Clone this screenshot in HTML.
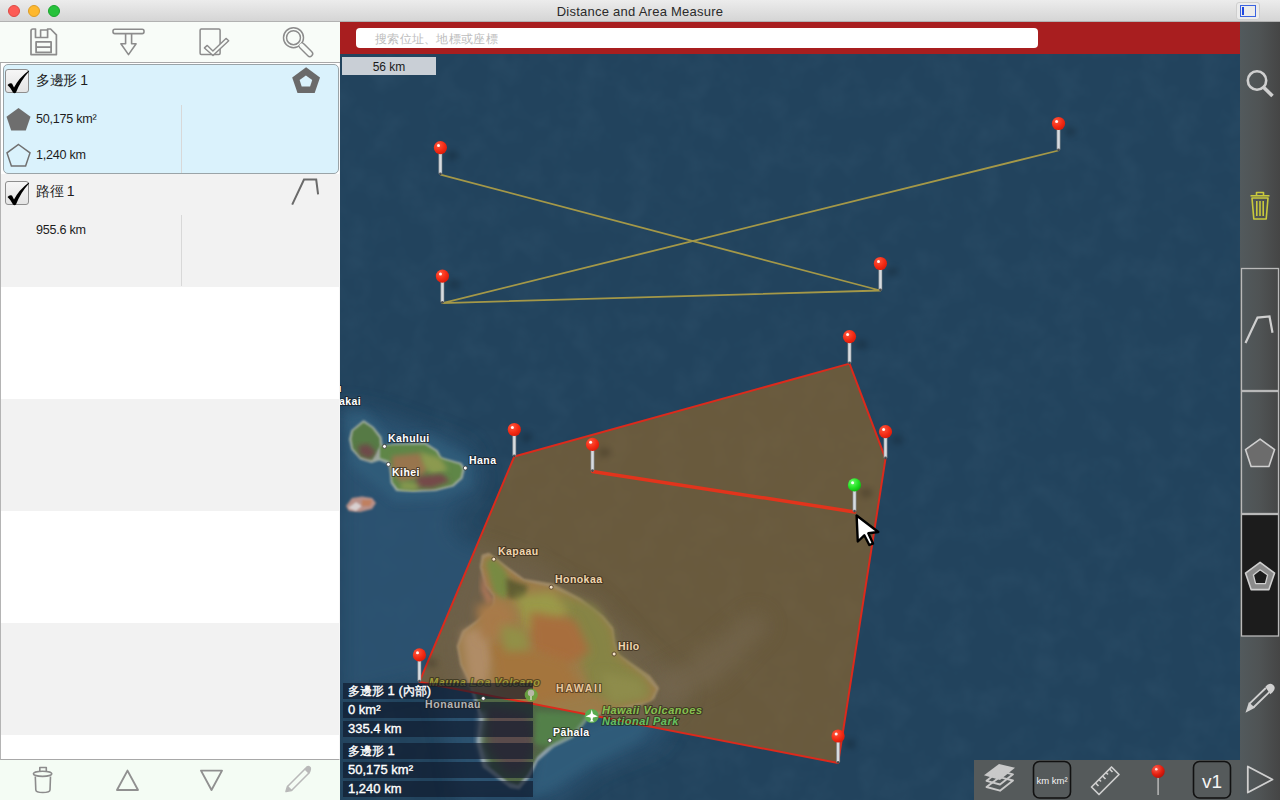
<!DOCTYPE html>
<html><head><meta charset="utf-8">
<style>
*{margin:0;padding:0;box-sizing:border-box}
html,body{width:1280px;height:800px;overflow:hidden;background:#fff;font-family:"Liberation Sans",sans-serif}
.abs{position:absolute}
svg{position:absolute;overflow:visible}
#title{left:0;top:0;width:1280px;height:22px;background:linear-gradient(#ececec,#d5d5d5);border-bottom:1px solid #b2b2b2}
#title .t{position:absolute;left:0;width:1280px;top:4px;text-align:center;font-size:13px;color:#2a2a2a;letter-spacing:0.25px}
.tl{position:absolute;top:5px;width:12px;height:12px;border-radius:50%}
#tb{left:0;top:22px;width:340px;height:41px;background:#f8fcf8;border-bottom:1px solid #a8a8a8}
#list{left:0;top:63px;width:340px;height:697px;border-bottom:1px solid #a8a8a8;background:#fff;border-left:1px solid #b4b4b4;border-right:1px solid #f6f6f6}
.row{position:absolute;left:0;width:338px;height:112px}
.g{background:#f2f2f2}
.sel{position:absolute;left:2px;top:1px;width:336px;height:110px;background:#daf2fc;border:1px solid #9aa4a8;border-radius:5px}
.cb{position:absolute;left:4px;width:24px;height:24px;border:1px solid #8e8e8e;border-radius:3px;background:linear-gradient(#f6f6f6,#e4e4e4)}
.name{position:absolute;left:35px;font-size:14px;color:#1d1d1d;letter-spacing:-0.4px}
.val{position:absolute;left:35px;font-size:12.6px;color:#1d1d1d;letter-spacing:-0.25px}
.vsep{position:absolute;left:180px;width:1px;background:#d8d8d8}
#btb{left:0;top:760px;width:340px;height:40px;background:#f4fcf4}
#map{left:340px;top:22px;width:900px;height:778px;background:#22435d;overflow:hidden}
#rt{left:1240px;top:22px;width:40px;height:778px;background:linear-gradient(90deg,#525a5d,#4f5354 50%,#454545)}
#redbar{left:340px;top:22px;width:900px;height:32px;background:#a81e1f}
#search{left:356px;top:28px;width:682px;height:20px;background:#fff;border-radius:4px}
#search span{position:absolute;left:19px;top:3px;font-size:12px;color:#bdbdbd;letter-spacing:0.3px}
#scale{left:342px;top:57px;width:94px;height:18px;background:#c9cfd6}
#scale span{position:absolute;left:0;width:94px;top:3px;text-align:center;font-size:12px;color:#1a1a1a}
.info{position:absolute;left:343px;width:190px;height:16px;background:rgba(14,24,42,0.64);color:#fff;font-size:13px;font-weight:normal;-webkit-text-stroke:0.35px #fff;padding-left:5px;line-height:16px}
</style></head><body>
<div id="title" class="abs">
  <div class="tl" style="left:8px;background:#fd5c56;border:1px solid #dd4a44"></div>
  <div class="tl" style="left:28px;background:#feb82e;border:1px solid #dc9c26"></div>
  <div class="tl" style="left:48px;background:#27c23b;border:1px solid #1aa42d"></div>
  <div class="t">Distance and Area Measure</div>
  <div class="abs" style="left:1236px;top:2px;width:24px;height:18px;border-radius:3px;background:#ececec;border:1px solid #cfcfcf"></div>
  <div class="abs" style="left:1240px;top:5px;width:16px;height:12px;border:1.5px solid #3a62e0"></div>
  <div class="abs" style="left:1242px;top:7px;width:2px;height:8px;background:#2048e0"></div>
</div>
<div id="tb" class="abs">
  <svg width="340" height="41" style="left:0;top:0" fill="none" stroke="#8c8c8c" stroke-width="1.6" stroke-linejoin="round">
    <path d="M35.5,15.5 V7 H33 Q31,7 31,9 V32.6 H56.4 V12.8 L50.6,7 H47.6 V15.5 Z" stroke-width="1.7"/>
    <path d="M40.6,15.5 V8 H47.6" stroke-width="1.6"/>
    <rect x="36.1" y="19.9" width="15" height="10.5" stroke-width="1.8"/>
    <path d="M36.1,25.1 H51.1" stroke-width="1.8"/>
    <rect x="113" y="7.2" width="31" height="4.4" rx="1.8" />
    <path d="M125.6,11.6 V21.8 H120.9 L128.5,32.6 L136.1,21.8 H131.6 V11.6" />
    <rect x="200.1" y="7" width="20" height="25.4" rx="1.2" stroke-width="1.5"/>
    <path d="M207.3,23.4 L212.9,29 L226,16.4 L228.7,18.7 L213,33.5 L204.4,25.9 Z" fill="#f8fcf8" stroke-width="1.4"/>
    <path d="M302.3,24.3 L309.8,31.8" stroke-width="7.1" stroke-linecap="round" />
    <circle cx="293.5" cy="15.7" r="10" stroke-width="1.45" />
    <path d="M301.5,23.5 L309.8,31.8" stroke-width="4.2" stroke="#f8fcf8" stroke-linecap="round" />
    <circle cx="293.5" cy="15.7" r="6.95" stroke-width="1.45" />
  </svg>
</div>
<div id="list" class="abs">
  <div class="row" style="top:0">
    <div class="sel"></div>
    <div class="cb" style="top:6px"><svg width="24" height="24" style="left:0;top:0"><path d="M1.5,15 Q3.5,12.5 6,13.5 L8,17.5 Q13,8 22.5,0.8 Q23.5,0.5 23,1.5 Q15,10 10,22.5 Q8.5,24 7,22.5 Q4.5,17.5 1.5,15 Z" fill="#000"/></svg></div>
    <div class="name" style="top:9px">多邊形 1</div>
    <svg width="40" height="40" style="left:290px;top:2px"><path d="M15.1,2.25 L29,12.6 L23.7,28 H6.5 L1.2,12.6 Z" fill="#6a6a6a"/><path d="M14.9,10.6 L21.2,15 L19.1,21.6 H10.7 L8.6,15 Z" fill="#daf2fc"/></svg>
    <div class="vsep" style="top:42px;height:68px"></div>
    <svg width="30" height="30" style="left:5px;top:44px"><path d="M12.5,1 L24.5,9.8 L19.8,23.5 H5.2 L0.5,9.8 Z" fill="#6e6e6e"/></svg>
    <div class="val" style="top:49px">50,175 km²</div>
    <svg width="30" height="30" style="left:5px;top:80px"><path d="M12.5,1.5 L24,9.9 L19.6,23 H5.4 L1,9.9 Z" fill="none" stroke="#707070" stroke-width="1.5"/></svg>
    <div class="val" style="top:85px">1,240 km</div>
  </div>
  <div class="row g" style="top:111px;height:113px">
    <div class="cb" style="top:7px"><svg width="24" height="24" style="left:0;top:0"><path d="M1.5,15 Q3.5,12.5 6,13.5 L8,17.5 Q13,8 22.5,0.8 Q23.5,0.5 23,1.5 Q15,10 10,22.5 Q8.5,24 7,22.5 Q4.5,17.5 1.5,15 Z" fill="#000"/></svg></div>
    <div class="name" style="top:9px">路徑 1</div>
    <svg width="40" height="40" style="left:290px;top:0px"><path d="M1.2,30.6 L13,5.6 H25.2 L27.1,20.3" fill="none" stroke="#6a6a6a" stroke-width="2"/></svg>
    <div class="vsep" style="top:41px;height:71px"></div>
    <div class="val" style="top:49px">955.6 km</div>
  </div>
  <div class="row" style="top:224px"></div>
  <div class="row g" style="top:336px"></div>
  <div class="row" style="top:448px"></div>
  <div class="row g" style="top:560px"></div>
  <div class="row" style="top:672px;height:25px"></div>
</div>
<div id="btb" class="abs">
  <svg width="340" height="40" style="left:0;top:0" fill="none" stroke="#8c8c8c" stroke-width="1.6" stroke-linejoin="round">
    <path d="M39.8,11 V7.5 H46.3 V11" />
    <ellipse cx="42.6" cy="13.8" rx="9.2" ry="2.6" />
    <path d="M35.3,16.5 L35.8,30 Q36,32.5 42.8,32.5 Q49.8,32.5 50,30 L50.5,16.5" />
    <path d="M127.5,10.6 L138,30 H117 Z" stroke-width="1.9" stroke="#909090"/>
    <path d="M201,10.6 H222 L211.5,30 Z" stroke-width="1.9" stroke="#909090"/>
    <g stroke="#b9b9b9">
      <path d="M287.5,26.5 L305,9 M291.5,30.5 L309,13" />
      <path d="M286,31.5 L287.5,26.5 L291.5,30.5 Z" fill="#b9b9b9"/>
      <path d="M305,9 L307,7 Q308.5,6 310,7.5 Q311,9 309,13 Z" fill="#b9b9b9"/>
    </g>
  </svg>
</div>
<div id="map" class="abs">
<svg width="900" height="778" viewBox="340 22 900 778" style="left:0;top:0;overflow:hidden">
<defs>
  <filter id="b1" x="-20%" y="-20%" width="140%" height="140%"><feGaussianBlur stdDeviation="1"/></filter>
  <filter id="b2" x="-20%" y="-20%" width="140%" height="140%"><feGaussianBlur stdDeviation="2.5"/></filter>
  <filter id="b4" x="-30%" y="-30%" width="160%" height="160%"><feGaussianBlur stdDeviation="5"/></filter>
  <filter id="b8" x="-50%" y="-50%" width="200%" height="200%"><feGaussianBlur stdDeviation="10"/></filter>
  <filter id="sh" x="-100%" y="-100%" width="300%" height="300%"><feGaussianBlur stdDeviation="3"/></filter>
  <filter id="tex" x="0" y="0" width="100%" height="100%">
    <feTurbulence type="fractalNoise" baseFrequency="0.035" numOctaves="3" seed="4"/>
    <feColorMatrix values="0 0 0 0 0.16  0 0 0 0 0.31  0 0 0 0 0.43  0 0 0 0.9 -0.35"/>
  </filter>
  <radialGradient id="pinR" cx="0.35" cy="0.3" r="0.75"><stop offset="0" stop-color="#ff5a40"/><stop offset="0.6" stop-color="#f42b14"/><stop offset="1" stop-color="#d81a0a"/></radialGradient>
  <radialGradient id="pinG" cx="0.35" cy="0.3" r="0.75"><stop offset="0" stop-color="#6aff6a"/><stop offset="0.6" stop-color="#22e022"/><stop offset="1" stop-color="#10b010"/></radialGradient>
</defs>
<rect x="340" y="22" width="900" height="778" fill="#22435d"/>
<rect x="340" y="22" width="900" height="778" filter="url(#tex)" opacity="0.15"/>
<g filter="url(#b8)" fill="#2d5676" opacity="0.75">
  <path d="M340,405 L380,412 L470,445 L485,480 L450,525 L470,545 L455,600 L430,680 L340,700 Z"/>
  <path d="M470,540 L530,560 L640,640 L690,690 L660,745 L600,770 L560,800 L460,800 L440,700 L440,610 Z"/>
</g>
<g filter="url(#b4)" fill="#33607e" opacity="0.7">
  <path d="M345,415 L365,412 L390,438 L430,436 L470,458 L472,485 L440,500 L395,502 L350,465 Z"/>
  <path d="M540,745 L600,722 L660,705 L640,740 L590,765 L550,790 L530,800 Z"/>
</g>
<clipPath id="cin"><path d="M514.3,456.5 L849.5,363.6 L885.5,458.7 L838.1,763 L419.4,681.9 Z"/></clipPath>
<g>
  <path d="M351.2,430.2 L363.6,420.1 L373.7,426.9 L381.6,437 L382.7,446 L394,443.7 L425.5,442.6 L437.9,450.5 L441.2,457.2 L461.5,462.9 L464.9,468.5 L462.6,478.6 L453.6,486.5 L435.6,491 L413.1,492.1 L396.2,491 L390.6,483.1 L389.5,468.5 L388.4,464 L379.4,460.6 L371.5,462.9 L360.2,459.5 L351.2,449.4 L349,439.2 Z" fill="#9eaaa0" filter="url(#b1)"/>
  <path d="M353,431 L363.6,422.5 L372,428 L379.5,438 L380,446 L372,460 L361,457 L353,448.5 L351.5,439 Z" fill="#567a44" filter="url(#b1)"/>
  <path d="M358,446 L368,444 L376,452 L370,459 L360,455 Z" fill="#6e4a4a" filter="url(#b2)"/>
  <path d="M380,446 L394,445 L425,444.5 L436,451.5 L440,458.5 L460,464.5 L462.5,469 L460.5,477.5 L452,485 L435,489 L413,490 L398,489 L392.5,482 L391.5,468 L389,461 L380,458 Z" fill="#5e8646" filter="url(#b1)"/>
  <path d="M392,456 L420,453 L430,466 L420,478 L400,482 L392,470 Z" fill="#98744e" filter="url(#b2)"/>
  <path d="M420,452 L440,458 L448,470 L432,474 L424,466 Z" fill="#8c9a50" filter="url(#b2)"/>
  <path d="M418,476 L442,474 L450,481 L432,488 L414,487 Z" fill="#744a48" filter="url(#b2)"/>
  <path d="M402,482 L420,484 L416,490 L400,489 Z" fill="#8a9a50" filter="url(#b2)"/>
</g>
<path d="M346,506 L352,498 L362,496.5 L372,498 L376,503 L372,509 L360,512 L349,511 Z" fill="#b89088" filter="url(#b1)"/>
<path d="M348,508 L356,502 L362,506 L356,511 Z" fill="#d8d0d0" filter="url(#b1)"/>
<path d="M362,500 L372,500 L370,506 L362,506 Z" fill="#c08060" filter="url(#b1)"/>
<!-- Big island raw (outside polygon visible) -->
<g>
  <path d="M482,555 L489,553 L506,566 L524,579 L553,584 L581,599 L603,616 L613,628 L615,643 L618,654 L631,663 L650,676 L659,688 L654,699 L639,706 L607,712 L588,719 L572.5,738 L554,747 L538,761 L530,777 L519.5,789.5 L510,788 L483,767.5 L477,742.5 L480,719 L468,680 L460.5,665 L457,646 L462.5,631 L477.5,620 L492.5,605 L493,596 L485,586 L480,567 Z" fill="#8ea0a8" filter="url(#b1)"/>
  <path d="M484,559 L491,556 L505,569 L523,582 L550,588 L578,602 L600,619 L610,631 L612,646 L622,660 L646,678 L655,690 L642,702 L610,708 L585,715 L570,732 L552,743 L537,757 L527,775 L518,785 L508,782 L486,764 L480,740 L483,718 L471,680 L463,663 L460,646 L466,633 L480,622 L495,606 L495,595 L487,584 L483,567 Z" fill="#506a44" filter="url(#b1)"/>
  <path d="M486,705 L528,712 L536,742 L524,772 L508,775 L488,748 Z" fill="#5a4c4c" filter="url(#b4)"/>
  <path d="M536,712 L590,714 L574,734 L548,746 L534,744 Z" fill="#52804a" filter="url(#b2)"/>
  <path d="M478,712 L486,712 L482,745 L490,765 L484,768 L476,742 Z" fill="#9aa8b0" filter="url(#b2)" opacity="0.7"/>
</g>

<path d="M514.3,456.5 L849.5,363.6 L885.5,458.7 L838.1,763 L419.4,681.9 Z" fill="rgba(170,112,32,0.52)"/>
<path d="M440.4,174.6 L880.4,290.5 L442.4,303.1 L1058.5,150.5" fill="none" stroke="#a49848" stroke-width="1.8" stroke-linejoin="round"/>
<g clip-path="url(#cin)">
  <path d="M470,545 L530,565 L600,600 L640,650 L690,690 L660,720 L560,740 L470,720 L445,660 L450,600 Z" fill="#6e604b" filter="url(#b8)" opacity="0.7"/>
  <path d="M650,680 L700,655 L755,610 L770,625 L720,680 L665,705 Z" fill="#76684f" filter="url(#b8)" opacity="0.7"/>
  <path d="M482,555 L489,553 L506,566 L524,579 L553,584 L581,599 L603,616 L613,628 L615,643 L618,654 L631,663 L650,676 L659,688 L654,699 L639,706 L607,712 L588,719 L572.5,738 L554,747 L538,761 L530,777 L519.5,789.5 L510,788 L483,767.5 L477,742.5 L480,719 L468,680 L460.5,665 L457,646 L462.5,631 L477.5,620 L492.5,605 L493,596 L485,586 L480,567 Z" fill="#a08a68" filter="url(#b1)"/>
  <path d="M484,558 L490,555.5 L505.5,568 L523.5,581 L551,587 L579,601 L601.5,618 L611.5,630 L613.5,645 L620,657 L644,677 L656,689 L650,701 L610,709 L586,716 L571,735 L552,745 L536,759 L528,776 L518,787 L509,784 L485,766 L479,741 L482,718 L470,680 L462,664 L459,646 L465,632 L479,621 L494.5,606 L494.5,595 L486.5,585 L482,567 Z" fill="#9c7c4a" filter="url(#b1)"/>
  <path d="M486,562 L493,558 L505,570 L512,588 L504,600 L494,592 L490,578 Z" fill="#788a42" filter="url(#b2)"/>
  <path d="M482,570 L487,588 L494,600 L488,606 L481,590 Z" fill="#aa7658" filter="url(#b2)"/>
  <path d="M506,578 L528,586 L524,600 L508,598 Z" fill="#5e5c30" filter="url(#b2)"/>
  <path d="M555,592 L595,606 L612,630 L616,655 L645,678 L652,695 L615,705 L590,690 L575,640 Z" fill="#868444" filter="url(#b4)"/>
  <path d="M515,596 L552,592 L568,610 L556,626 L526,630 Z" fill="#9a9a48" filter="url(#b4)"/>
  <path d="M530,612 L575,620 L590,652 L560,668 L532,650 Z" fill="#a86e3e" filter="url(#b4)"/>
  <path d="M462,632 L486,626 L494,656 L486,688 L468,680 Z" fill="#b08c66" filter="url(#b4)"/>
  <path d="M490,640 L530,650 L565,660 L585,694 L530,706 L498,694 Z" fill="#a4743e" filter="url(#b4)"/>
  <path d="M476,606 L500,600 L516,614 L505,636 L482,640 Z" fill="#a87a4a" filter="url(#b4)"/>
  <path d="M500,625 L525,630 L530,650 L505,652 Z" fill="#929046" filter="url(#b4)"/>
  <path d="M600,672 L640,680 L648,698 L610,704 Z" fill="#8e8c4c" filter="url(#b4)"/>
</g>

<path d="M514.3,456.5 L849.5,363.6 L885.5,458.7 L838.1,763 L419.4,681.9 Z" fill="none" stroke="#dc2a1c" stroke-width="2" stroke-linejoin="round"/>
<g font-family="Liberation Sans, sans-serif" font-weight="bold" font-size="10.5" letter-spacing="0.45" stroke-linejoin="round">
  <g stroke="rgba(20,20,20,0.55)" stroke-width="2.2" paint-order="stroke" fill="#fff">
    <text x="388" y="442">Kahului</text>
    <text x="392" y="476">Kihei</text>
    <text x="469" y="464">Hana</text>
    <text x="339" y="405">akai</text>
    <text x="335" y="392">u</text>
    <text x="553" y="736">Pāhala</text>
  </g>
  <g stroke="rgba(40,25,10,0.55)" stroke-width="2.2" paint-order="stroke" fill="#f0d6b0">
    <text x="498" y="555">Kapaau</text>
    <text x="555" y="583">Honokaa</text>
    <text x="618" y="650">Hilo</text>
    <text x="556" y="692" letter-spacing="1.6" fill="#e8c8a0">HAWAII</text>
  </g>
  <g stroke="rgba(30,30,10,0.55)" stroke-width="2.2" paint-order="stroke" font-style="italic" letter-spacing="0.5" font-size="11">
    <text x="429" y="686" fill="#a09a3a">Mauna Loa Volcano</text>
    <text x="602" y="714" fill="#86c050">Hawaii Volcanoes</text>
    <text x="602" y="725" fill="#64c060">National Park</text>
  </g>
  <g fill="#fff" stroke="#333" stroke-width="0.8">
    <circle cx="384.5" cy="446.4" r="2"/><circle cx="388.4" cy="464.4" r="2"/><circle cx="465.3" cy="468.1" r="2"/>
    <circle cx="549.8" cy="740.4" r="2"/>
  </g>
  <g fill="#f5e4c8" stroke="#4a3520" stroke-width="0.8">
    <circle cx="493.8" cy="559.2" r="2"/><circle cx="551.2" cy="587.2" r="2"/><circle cx="614.1" cy="654" r="2"/>
  </g>

  <circle cx="591.7" cy="716" r="7" fill="#5aaa50"/>
  <path d="M591.7,709.5 L593,714 L598,716.5 L593,717.5 L592.5,720 L594,721.5 L589.5,721.5 L591,720 L590.5,717.5 L585.5,716.5 L590.5,714 Z" fill="#fff"/>
</g>
<path d="M592.5,471.4 L854.5,511.9" stroke="#e2341c" stroke-width="3.5" stroke-linecap="round"/>
<g><ellipse cx="452.4" cy="155.6" rx="6" ry="4.5" fill="#000" opacity="0.2" filter="url(#sh)"/>
<rect x="438.8" y="151.6" width="3.2" height="23.0" rx="1.5" fill="#d8dce0" stroke="#7a7f84" stroke-width="0.6"/>
<circle cx="440.4" cy="173.8" r="1.3" fill="#303030" opacity="0.8"/>
<circle cx="440.4" cy="147.6" r="6.6" fill="url(#pinR)"/>
<circle cx="438.5" cy="145.5" r="1.5" fill="#fff" opacity="0.95"/></g>
<g><ellipse cx="454.4" cy="284.1" rx="6" ry="4.5" fill="#000" opacity="0.2" filter="url(#sh)"/>
<rect x="440.8" y="280.1" width="3.2" height="23.0" rx="1.5" fill="#d8dce0" stroke="#7a7f84" stroke-width="0.6"/>
<circle cx="442.4" cy="302.3" r="1.3" fill="#303030" opacity="0.8"/>
<circle cx="442.4" cy="276.1" r="6.6" fill="url(#pinR)"/>
<circle cx="440.5" cy="274.0" r="1.5" fill="#fff" opacity="0.95"/></g>
<g><ellipse cx="892.4" cy="271.5" rx="6" ry="4.5" fill="#000" opacity="0.2" filter="url(#sh)"/>
<rect x="878.8" y="267.5" width="3.2" height="23.0" rx="1.5" fill="#d8dce0" stroke="#7a7f84" stroke-width="0.6"/>
<circle cx="880.4" cy="289.7" r="1.3" fill="#303030" opacity="0.8"/>
<circle cx="880.4" cy="263.5" r="6.6" fill="url(#pinR)"/>
<circle cx="878.5" cy="261.4" r="1.5" fill="#fff" opacity="0.95"/></g>
<g><ellipse cx="1070.5" cy="131.5" rx="6" ry="4.5" fill="#000" opacity="0.2" filter="url(#sh)"/>
<rect x="1056.9" y="127.5" width="3.2" height="23.0" rx="1.5" fill="#d8dce0" stroke="#7a7f84" stroke-width="0.6"/>
<circle cx="1058.5" cy="149.7" r="1.3" fill="#303030" opacity="0.8"/>
<circle cx="1058.5" cy="123.5" r="6.6" fill="url(#pinR)"/>
<circle cx="1056.6" cy="121.4" r="1.5" fill="#fff" opacity="0.95"/></g>
<g><ellipse cx="526.3" cy="437.5" rx="6" ry="4.5" fill="#000" opacity="0.2" filter="url(#sh)"/>
<rect x="512.7" y="433.5" width="3.2" height="23.0" rx="1.5" fill="#d8dce0" stroke="#7a7f84" stroke-width="0.6"/>
<circle cx="514.3" cy="455.7" r="1.3" fill="#303030" opacity="0.8"/>
<circle cx="514.3" cy="429.5" r="6.6" fill="url(#pinR)"/>
<circle cx="512.4" cy="427.4" r="1.5" fill="#fff" opacity="0.95"/></g>
<g><ellipse cx="861.5" cy="344.6" rx="6" ry="4.5" fill="#000" opacity="0.2" filter="url(#sh)"/>
<rect x="847.9" y="340.6" width="3.2" height="23.0" rx="1.5" fill="#d8dce0" stroke="#7a7f84" stroke-width="0.6"/>
<circle cx="849.5" cy="362.8" r="1.3" fill="#303030" opacity="0.8"/>
<circle cx="849.5" cy="336.6" r="6.6" fill="url(#pinR)"/>
<circle cx="847.6" cy="334.5" r="1.5" fill="#fff" opacity="0.95"/></g>
<g><ellipse cx="897.5" cy="439.7" rx="6" ry="4.5" fill="#000" opacity="0.2" filter="url(#sh)"/>
<rect x="883.9" y="435.7" width="3.2" height="23.0" rx="1.5" fill="#d8dce0" stroke="#7a7f84" stroke-width="0.6"/>
<circle cx="885.5" cy="457.9" r="1.3" fill="#303030" opacity="0.8"/>
<circle cx="885.5" cy="431.7" r="6.6" fill="url(#pinR)"/>
<circle cx="883.6" cy="429.6" r="1.5" fill="#fff" opacity="0.95"/></g>
<g><ellipse cx="850.1" cy="744.0" rx="6" ry="4.5" fill="#000" opacity="0.2" filter="url(#sh)"/>
<rect x="836.5" y="740.0" width="3.2" height="23.0" rx="1.5" fill="#d8dce0" stroke="#7a7f84" stroke-width="0.6"/>
<circle cx="838.1" cy="762.2" r="1.3" fill="#303030" opacity="0.8"/>
<circle cx="838.1" cy="736.0" r="6.6" fill="url(#pinR)"/>
<circle cx="836.2" cy="733.9" r="1.5" fill="#fff" opacity="0.95"/></g>
<g><ellipse cx="431.4" cy="662.9" rx="6" ry="4.5" fill="#000" opacity="0.2" filter="url(#sh)"/>
<rect x="417.8" y="658.9" width="3.2" height="23.0" rx="1.5" fill="#d8dce0" stroke="#7a7f84" stroke-width="0.6"/>
<circle cx="419.4" cy="681.1" r="1.3" fill="#303030" opacity="0.8"/>
<circle cx="419.4" cy="654.9" r="6.6" fill="url(#pinR)"/>
<circle cx="417.5" cy="652.8" r="1.5" fill="#fff" opacity="0.95"/></g>
<g><ellipse cx="604.5" cy="452.4" rx="6" ry="4.5" fill="#000" opacity="0.2" filter="url(#sh)"/>
<rect x="590.9" y="448.4" width="3.2" height="23.0" rx="1.5" fill="#d8dce0" stroke="#7a7f84" stroke-width="0.6"/>
<circle cx="592.5" cy="470.6" r="1.3" fill="#303030" opacity="0.8"/>
<circle cx="592.5" cy="444.4" r="6.6" fill="url(#pinR)"/>
<circle cx="590.6" cy="442.3" r="1.5" fill="#fff" opacity="0.95"/></g>
<g><ellipse cx="866.5" cy="492.9" rx="6" ry="4.5" fill="#000" opacity="0.2" filter="url(#sh)"/>
<rect x="852.9" y="488.9" width="3.2" height="23.0" rx="1.5" fill="#d8dce0" stroke="#7a7f84" stroke-width="0.6"/>
<circle cx="854.5" cy="511.1" r="1.3" fill="#303030" opacity="0.8"/>
<circle cx="854.5" cy="484.9" r="6.6" fill="url(#pinG)"/>
<circle cx="852.6" cy="482.8" r="1.5" fill="#fff" opacity="0.95"/></g>

<path d="M856.6,515.5 L857.8,541.5 L864.3,535.3 L869.3,545 L873,543.6 L868.3,533.3 L878.3,532 Z" fill="#fff" stroke="#000" stroke-width="2.4" stroke-linejoin="round"/>
</svg>
</div>
<div id="redbar" class="abs"></div>
<div id="search" class="abs"><span>搜索位址、地標或座標</span></div>
<div id="scale" class="abs"><span>56 km</span></div>
<div class="info" style="top:683px"><span style="font-size:12px">多邊形</span> 1 (<span style="font-size:12px">內部</span>)</div><div class="info" style="top:702px">0 km²</div><div class="info" style="top:721px">335.4 km</div><div class="info" style="top:743px"><span style="font-size:12px">多邊形</span> 1</div><div class="info" style="top:762px">50,175 km²</div><div class="info" style="top:781px">1,240 km</div>
<svg width="1280" height="800" style="left:0;top:0;pointer-events:none">
<g font-family="Liberation Sans, sans-serif" font-weight="bold" font-size="10.5" letter-spacing="0.6">
  <text x="425" y="708" fill="#b4b4b4" stroke="rgba(30,30,30,0.6)" stroke-width="2.2" paint-order="stroke" stroke-linejoin="round">Honaunau</text>
  <circle cx="483.3" cy="698.4" r="2" fill="#fff" stroke="#333" stroke-width="0.8"/>
  <circle cx="531.2" cy="695" r="6.5" fill="#6aa840" opacity="0.9"/>
  <circle cx="531" cy="693" r="3.2" fill="#b8b8a8"/><path d="M531,696 V700" stroke="#e8e8d8" stroke-width="1.2"/>
</g></svg>
<div id="rt" class="abs"></div>
<div class="abs" style="left:974px;top:760px;width:266px;height:40px;background:#555a5b"></div>
<svg width="1280" height="800" style="left:0;top:0;pointer-events:none">
  <g fill="none" stroke="#cfcfcf" stroke-width="2.6">
    <circle cx="1257" cy="80.5" r="9.2"/>
    <path d="M1263.8,87.5 L1272.5,96" stroke-width="3.6"/>
  </g>
  <g fill="none" stroke="#c9c93c" stroke-width="1.6" stroke-linejoin="round">
    <path d="M1256.5,195.5 V192.5 H1263.5 V195.5"/>
    <path d="M1250.5,195.8 H1269.5"/>
    <path d="M1252,198 L1253.8,219 H1266.2 L1268,198 Z"/>
    <path d="M1256.8,201 V216 M1260,201 V216 M1263.2,201 V216"/>
  </g>
  <g fill="none" stroke="#b9b9b9" stroke-width="1.3">
    <rect x="1241.5" y="268.5" width="37" height="122"/>
    <rect x="1241.5" y="391.5" width="37" height="122"/>
  </g>
  <rect x="1241.5" y="514.5" width="37" height="121.5" fill="#1c1c1c" stroke="#b9b9b9" stroke-width="1.3"/>
  <path d="M1245.5,343 L1257.5,317.6 L1269.5,316.5 L1272.5,332.7" fill="none" stroke="#cfcfcf" stroke-width="2.2"/>
  <path d="M1260.1,439.1 L1274.6,449.6 L1268.9,466.5 L1251.1,466.5 L1245.5,449.6 Z" fill="#6c6c6c" stroke="#cfcfcf" stroke-width="1.6" stroke-linejoin="round"/>
  <path d="M1260.1,562.3 L1274.6,573.1 L1268.9,589.6 L1251.1,589.6 L1245.5,573.1 Z" fill="#8a8a8a" stroke="#cfcfcf" stroke-width="1.6" stroke-linejoin="round"/>
  <path d="M1260.1,569.8 L1267.6,575 L1265.4,583.6 L1255.6,583.6 L1253.4,575 Z" fill="#1c1c1c" stroke="#cfcfcf" stroke-width="1.3" stroke-linejoin="round"/>
  <g stroke="#d0d0d0" stroke-width="1.8" fill="#d0d0d0">
    <path d="M1249.3,703.8 L1265.8,688 M1253.4,707.5 L1269.5,691.8" fill="none"/>
    <path d="M1247,711 L1249.3,703.8 L1253.4,707.5 Z"/>
    <path d="M1266.5,687 L1268,685.5 Q1271,683.5 1273,686 Q1275,688.5 1272,691.5 L1270.5,692.8 Z"/>
  </g>
  <path d="M1247.8,766.5 L1272.5,779.5 L1247.8,792.5 Z" fill="none" stroke="#cfcfcf" stroke-width="1.8" stroke-linejoin="round"/>
  <!-- bottom right toolbar -->
  <g fill="#c9c9c9">
    <path d="M984,775.3 L999,764 L1015,767.8 L1000,780 Z"/>
  </g>
  <g fill="none" stroke="#c9c9c9" stroke-width="1.9" stroke-linejoin="round">
    <path d="M986.5,780.8 L999.5,771 L1013,774.3 L1000,784.5 Z"/>
    <path d="M986.5,787 L999.5,777.2 L1013,780.5 L1000,790.7 Z"/>
  </g>
  <rect x="1033.5" y="761.5" width="37" height="36.5" rx="6" fill="none" stroke="#111" stroke-width="1.6"/>
  <text x="1052" y="784" text-anchor="middle" font-family="Liberation Sans, sans-serif" font-size="9.5" fill="#f4f4f4">km km²</text>
  <g fill="none" stroke="#cfcfcf" stroke-width="1.7" stroke-linejoin="round">
    <path d="M1091.5,787 L1111.5,767 L1119,774.5 L1099,794.5 Z"/>
    <path d="M1095.5,783 L1098.5,786 M1099,779.5 L1101,781.5 M1102.5,776 L1105.5,779 M1106,772.5 L1108,774.5 M1109.5,769 L1112.5,772"/>
  </g>
  <path d="M1158.1,776 V795" stroke="#bfbfbf" stroke-width="1.4"/>
  <circle cx="1158.1" cy="771.3" r="6.6" fill="url(#pinR2)"/>
  <circle cx="1156.3" cy="769.2" r="1.3" fill="#fff" opacity="0.8"/>
  <rect x="1193.5" y="761.5" width="37" height="36.5" rx="6" fill="none" stroke="#111" stroke-width="1.6"/>
  <text x="1212" y="787.5" text-anchor="middle" font-family="Liberation Sans, sans-serif" font-size="19" fill="#f4f4f4">v1</text>
  <defs><radialGradient id="pinR2" cx="0.35" cy="0.3" r="0.75"><stop offset="0" stop-color="#ff6050"/><stop offset="0.6" stop-color="#e42010"/><stop offset="1" stop-color="#b81008"/></radialGradient></defs>
</svg>
</body></html>
